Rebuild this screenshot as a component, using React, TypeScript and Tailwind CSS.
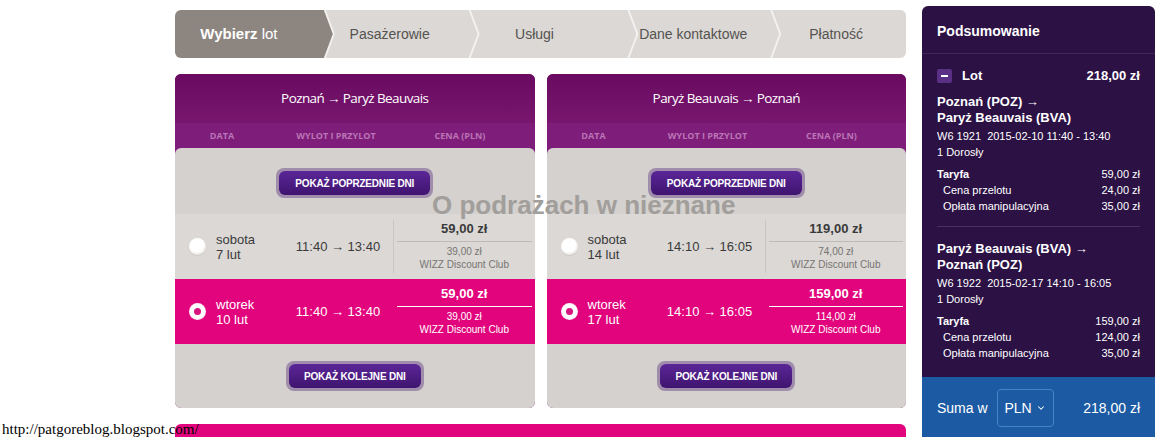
import { ChevronDown } from 'lucide-react'

type Row = {
  day: string
  date: string
  time: string
  price: string
  club: string
  selected?: boolean
}

const steps = [
  { label: 'Wybierz', rest: ' lot', shape: 'first', pad: 'pr-[30px]' },
  { label: 'Pasażerowie', shape: 'mid', pad: 'pr-[24px]' },
  { label: 'Usługi', shape: 'mid', pad: 'pr-[38px]' },
  { label: 'Dane kontaktowe', shape: 'mid', pad: 'pr-[22px]' },
  { label: 'Płatność', shape: 'last', pad: 'pr-[6px]' },
]

const outbound: Row[] = [
  { day: 'sobota', date: '7 lut', time: '11:40 → 13:40', price: '59,00 zł', club: '39,00 zł' },
  { day: 'wtorek', date: '10 lut', time: '11:40 → 13:40', price: '59,00 zł', club: '39,00 zł', selected: true },
]

const inbound: Row[] = [
  { day: 'sobota', date: '14 lut', time: '14:10 → 16:05', price: '119,00 zł', club: '74,00 zł' },
  { day: 'wtorek', date: '17 lut', time: '14:10 → 16:05', price: '159,00 zł', club: '114,00 zł', selected: true },
]

function Stepper() {
  return (
    <div className="flex h-[48px] overflow-hidden rounded-[6px] bg-[#f3f2f1]">
      {steps.map((s, i) => {
        const clip =
          s.shape === 'first'
            ? '[clip-path:polygon(0_0,calc(100%_-_9px)_0,100%_50%,calc(100%_-_9px)_100%,0_100%)]'
            : s.shape === 'last'
              ? '[clip-path:polygon(0_0,100%_0,100%_100%,0_100%,9px_50%)]'
              : '[clip-path:polygon(0_0,calc(100%_-_9px)_0,100%_50%,calc(100%_-_9px)_100%,0_100%,9px_50%)]'
        const active = i === 0
        return (
          <div
            key={s.label}
            className={`flex flex-1 items-center justify-center ${clip} ${s.pad} ${i > 0 ? '-ml-[7px]' : ''} ${
              active ? 'bg-[#8d8680] text-[15px] text-white' : 'bg-[#dbd8d5] text-[14px] text-[#555350]'
            }`}
          >
            {active ? (
              <span>
                <b>{s.label}</b>
                {s.rest}
              </span>
            ) : (
              s.label
            )}
          </div>
        )
      })}
    </div>
  )
}

function PurpleButton({ label, width }: { label: string; width: string }) {
  return (
    <div className={`mx-auto flex h-[30px] ${width} rounded-[8px] bg-[#a08dab] p-[3px]`}>
      <div className="flex flex-1 items-center justify-center rounded-[6px] bg-gradient-to-b from-[#5b2698] to-[#3f146f] text-[10px] font-bold tracking-[-0.2px] text-white">
        {label}
      </div>
    </div>
  )
}

function Radio({ on }: { on?: boolean }) {
  if (on) {
    return (
      <div className="flex h-[17px] w-[17px] items-center justify-center rounded-full bg-[radial-gradient(circle_at_50%_50%,#ffffff_55%,#f2b9d6_100%)]">
        <div className="h-[7px] w-[7px] rounded-full bg-[#d8147f]" />
      </div>
    )
  }
  return (
    <div className="h-[17px] w-[17px] rounded-full bg-[radial-gradient(circle_at_45%_40%,#ffffff_50%,#cdcac7_100%)] shadow-[0_1px_1px_rgba(0,0,0,0.08)]" />
  )
}

function FlightRow({ row }: { row: Row }) {
  const on = row.selected
  return (
    <div
      className={`grid h-[65px] grid-cols-[41px_67px_110px_1fr] items-center ${
        on ? 'bg-[#e2047c] text-white' : 'bg-[#dbd8d5] text-[#3a3a3a]'
      }`}
    >
      <div className="pl-[14px]">
        <Radio on={on} />
      </div>
      <div className="text-[13px] leading-[15px]">
        <div>{row.day}</div>
        <div>{row.date}</div>
      </div>
      <div className="text-center text-[13px]">{row.time}</div>
      <div
        className={`flex h-[53px] flex-col border-l pt-[1px] text-center ${
          on ? 'border-transparent' : 'border-[#c9c6c3]'
        }`}
      >
        <div className="text-[13px] font-bold leading-[16px]">{row.price}</div>
        <div className={`mx-[3px] mt-[4px] h-px ${on ? 'bg-white' : 'bg-[#bdbab7]'}`} />
        <div className={`mt-[3px] text-[10px] leading-[13px] ${on ? 'text-white' : 'text-[#777573]'}`}>
          {row.club}
        </div>
        <div className={`text-[10px] leading-[13px] ${on ? 'text-white' : 'text-[#777573]'}`}>
          WIZZ Discount Club
        </div>
      </div>
    </div>
  )
}

function FlightCard({ title, rows }: { title: string; rows: Row[] }) {
  return (
    <div className="flex-1 overflow-hidden rounded-[6px] bg-[#7e1e7a]">
      <div className="flex h-[49px] items-center justify-center bg-gradient-to-b from-[#690a60] to-[#79166f] font-['Open_Sans',sans-serif] text-[13.5px] tracking-[-0.6px] text-white">
        {title}
      </div>
      <div className="flex h-[25px] items-center font-['Open_Sans',sans-serif] text-[9px] font-bold text-[#bb74b6]">
        <div className="w-[94px] text-center">DATA</div>
        <div className="w-[134px] text-center">WYLOT I PRZYLOT</div>
        <div className="w-[114px] text-center">CENA (PLN)</div>
      </div>
      <div className="rounded-t-[6px] bg-[#d4d1ce] pt-[20px] pb-[17px]">
        <PurpleButton label="POKAŻ POPRZEDNIE DNI" width="w-[157px]" />
        <div className="mt-[16px]">
          {rows.map((r) => (
            <FlightRow key={r.date} row={r} />
          ))}
        </div>
        <div className="mt-[17px]">
          <PurpleButton label="POKAŻ KOLEJNE DNI" width="w-[138px]" />
        </div>
      </div>
    </div>
  )
}

function Line({ label, value, indent, bold }: { label: string; value: string; indent?: boolean; bold?: boolean }) {
  return (
    <div className="flex justify-between text-[11px] leading-[16px]">
      <span className={`${indent ? 'pl-[6px]' : ''} ${bold ? 'font-bold' : ''}`}>{label}</span>
      <span>{value}</span>
    </div>
  )
}

function SummaryFlight({
  from,
  to,
  info,
  total,
  fare,
}: {
  from: string
  to: string
  info: string
  total: string
  fare: string
}) {
  return (
    <div>
      <div className="text-[13px] font-bold leading-[16px]">
        <div>{from}</div>
        <div>{to}</div>
      </div>
      <div className="mt-[2px] whitespace-pre text-[11px] leading-[16px]">{info}</div>
      <div className="text-[11px] leading-[16px]">1 Dorosły</div>
      <div className="mt-[6px]">
        <Line label="Taryfa" value={total} bold />
        <Line label="Cena przelotu" value={fare} indent />
        <Line label="Opłata manipulacyjna" value="35,00 zł" indent />
      </div>
    </div>
  )
}

function Summary() {
  return (
    <aside className="mt-[6px] ml-[16px] flex h-[450px] w-[233px] flex-col overflow-hidden rounded-t-[6px] bg-[#2b1144] text-white">
      <div className="flex h-[48px] shrink-0 items-center border-b border-[#3e2858] px-[15px] pt-[3px] text-[14px] font-bold">
        Podsumowanie
      </div>
      <div className="px-[15px] pt-[14px]">
        <div className="flex h-[16px] items-center text-[13px] font-bold">
          <div className="flex h-[14px] w-[15px] items-center justify-center rounded-[2px] bg-[#5a3087]">
            <div className="h-[2px] w-[7px] bg-white" />
          </div>
          <span className="ml-[10px]">Lot</span>
          <span className="ml-auto">218,00 zł</span>
        </div>
        <div className="mt-[10px]">
          <SummaryFlight
            from="Poznań (POZ) →"
            to="Paryż Beauvais (BVA)"
            info="W6 1921  2015-02-10 11:40 - 13:40"
            total="59,00 zł"
            fare="24,00 zł"
          />
        </div>
        <div className="mt-[12px] h-px bg-[#443062]" />
        <div className="mt-[14px]">
          <SummaryFlight
            from="Paryż Beauvais (BVA) →"
            to="Poznań (POZ)"
            info="W6 1922  2015-02-17 14:10 - 16:05"
            total="159,00 zł"
            fare="124,00 zł"
          />
        </div>
      </div>
      <div className="mt-[16px] flex h-[80px] items-start bg-[#1c5ba4] px-[15px] pt-[12px] text-[14px]">
        <div className="flex h-[38px] w-full items-center">
          <span>Suma w</span>
          <div className="ml-[9px] flex h-[38px] w-[57px] items-center justify-center gap-[4px] rounded-[4px] border border-[#4b82c5]">
            <span>PLN</span>
            <ChevronDown size={10} strokeWidth={2.5} />
          </div>
          <span className="ml-auto">218,00 zł</span>
        </div>
      </div>
    </aside>
  )
}

export default function App() {
  return (
    <div className="relative h-[437px] w-[1171px] overflow-hidden bg-white font-['Liberation_Sans',Arial,sans-serif]">
      <div className="flex pl-[175px]">
        <main className="w-[731px] shrink-0 pt-[10px]">
          <Stepper />
          <div className="mt-[16px] flex gap-[12px]">
            <FlightCard title="Poznań → Paryż Beauvais" rows={outbound} />
            <FlightCard title="Paryż Beauvais → Poznań" rows={inbound} />
          </div>
          <div className="mt-[16px] h-[40px] rounded-t-[6px] bg-[#e2047c]" />
        </main>
        <Summary />
      </div>
      <div className="pointer-events-none absolute top-[192px] left-[432px] text-[26px] leading-[26px] font-bold whitespace-nowrap text-[#a19e9b]">
        O podrażach w nieznane
      </div>
      <div className="absolute top-[421px] left-[2px] font-['Liberation_Serif','Times_New_Roman',serif] text-[15px] leading-[16px] text-black">
        http://patgoreblog.blogspot.com/
      </div>
    </div>
  )
}
